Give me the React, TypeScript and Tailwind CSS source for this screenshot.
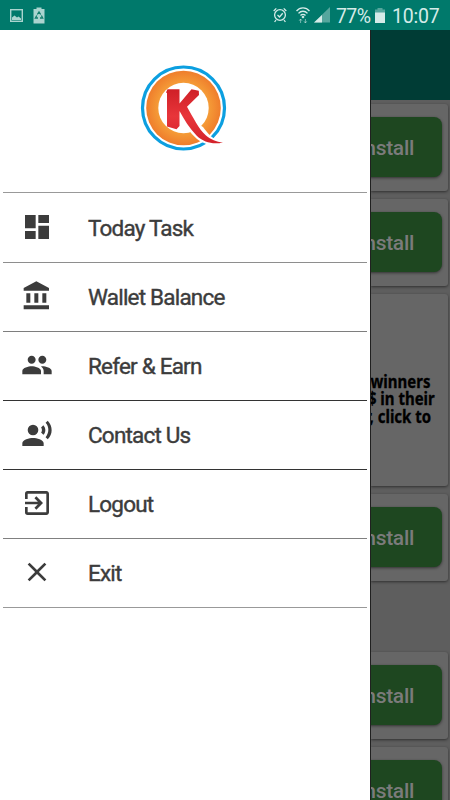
import React from 'react';
import {
  MdClose,
  MdDashboard,
  MdExitToApp,
  MdPeople,
  MdRecordVoiceOver,
} from 'react-icons/md';

function BankIcon({ size }: { size: number }) {
  return (
    <svg width={size} height={size} viewBox="0 0 24 24" fill="currentColor">
      <path d="M4 10v7h3v-7H4zm6 0v7h3v-7h-3zM2 22h19v-3H2v3zm14-12v7h3v-7h-3zm-4.5-9L2 6v2h19V6l-9.5-5z" />
    </svg>
  );
}

const menuItems = [
  { label: 'Today Task', icon: MdDashboard, row: 'h-[70px] pb-px border-b border-[#8e8e8e]' },
  { label: 'Wallet Balance', icon: BankIcon, row: 'h-[69px] pb-[3px] border-b border-[#7e7e7e]' },
  { label: 'Refer & Earn', icon: MdPeople, row: 'h-[69px] pb-[3px] border-b border-[#333333]' },
  { label: 'Contact Us', icon: MdRecordVoiceOver, row: 'h-[69px] pb-[3px] border-b border-[#333333]' },
  { label: 'Logout', icon: MdExitToApp, row: 'h-[69px] pb-[3px] border-b border-[#808080]' },
  { label: 'Exit', icon: MdClose, row: 'h-[69px] pb-[3px] border-b border-[#999999]' },
];

function StatusBar() {
  return (
    <header className="flex h-[30px] shrink-0 items-center bg-[#00796b] pl-2.5 pr-[10px] text-[#d5ebe8]">
      <svg width="13" height="13" viewBox="0 0 13 13" className="opacity-80">
        <rect x="0.7" y="0.7" width="11.6" height="11.6" fill="none" stroke="currentColor" strokeWidth="1.4" />
        <path d="M2 11V8.5L4.5 6.5L7 8.5L8.5 7.5L11 9.5V11Z" fill="currentColor" />
      </svg>
      <svg width="12" height="17" viewBox="0 0 12 17" className="ml-2.5 opacity-80">
        <path d="M0.5 2H3.5V0.5H8.5V2H11.5V16.5H0.5Z" fill="currentColor" />
        <path
          d="M4.3 7.5L6 5L7.7 7.5M8.4 8.5L9.7 11H7M5 11H2.4L3.8 8.5"
          fill="none"
          stroke="#17806f"
          strokeWidth="1.3"
        />
      </svg>
      <div className="ml-auto flex items-center">
        <svg width="14" height="16" viewBox="0 0 14 16" fill="none" stroke="currentColor" strokeWidth="1.3" className="mr-px">
          <circle cx="7" cy="8" r="5.4" />
          <path d="M0.7 4L3.3 1.4M13.3 4L10.7 1.4M3 13L1.6 15M11 13L12.4 15M4.5 8L6.5 10L9.7 6.3" />
        </svg>
        <svg width="14" height="17" viewBox="0 0 14 17" fill="none" stroke="currentColor" className="mr-px ml-2">
          <path
            d="M0.5 4C4 -0.2 10 -0.2 13.5 4M2.5 6.4C5 3.5 9 3.5 11.5 6.4M4.5 8.6C6 7 8 7 9.5 8.6"
            strokeWidth="1.4"
          />
          <circle cx="7" cy="10" r="0.9" fill="currentColor" />
          <path d="M4.6 16V12M3.2 13.7L4.6 12L6 13.7M9.4 12V16M8 14.3L9.4 16L10.8 14.3" strokeWidth="1" opacity="0.55" />
        </svg>
        <svg width="16" height="16" viewBox="0 0 16 16" className="ml-[3px]">
          <path d="M0 15.5L16 0V15.5Z" fill="currentColor" opacity="0.4" />
          <path d="M0 15.5L8 8V15.5Z" fill="currentColor" />
        </svg>
        <span className="ml-1.5 w-[36px] pt-[3px] whitespace-nowrap text-[19.5px] leading-[27px] tracking-[-0.6px]">
          77%
        </span>
        <svg width="10" height="15" viewBox="0 0 10 15" className="mr-px ml-[3px]">
          <path d="M0 1.5H2.5V0H7.5V1.5H10V15H0Z" fill="currentColor" opacity="0.4" />
          <path d="M0 4.5H10V15H0Z" fill="currentColor" />
        </svg>
        <span className="ml-1.5 w-[48px] pt-[3px] whitespace-nowrap text-[19.5px] leading-[27px] tracking-[-0.2px]">
          10:07
        </span>
      </div>
    </header>
  );
}

function Logo() {
  return (
    <svg width="88" height="88" viewBox="0 0 88 88">
      <defs>
        <radialGradient id="ring">
          <stop offset="0.6" stopColor="#f6a33a" />
          <stop offset="1" stopColor="#ef7d2c" />
        </radialGradient>
        <linearGradient id="letter" x1="0" y1="0" x2="0" y2="1">
          <stop offset="0" stopColor="#cf2027" />
          <stop offset="0.5" stopColor="#e8353a" />
          <stop offset="1" stopColor="#d3222a" />
        </linearGradient>
      </defs>
      <circle cx="44.5" cy="44" r="41" fill="white" stroke="#0c9fe0" strokeWidth="3.2" />
      <circle cx="44.5" cy="44" r="37.3" fill="url(#ring)" />
      <circle cx="44.5" cy="44" r="25.2" fill="white" />
      <path d="M38 47C45 60 51 69 58 75C66 81 75 83 88 80L80 77C74 75 69 70 64 63Z" fill="white" />
      <path
        d="M27 28.5L28.5 25.3H40.5V39.5L52.5 25.2L59.8 26.8L60 31L48 42.8C54 53 59.5 65 67 71.5C72 75.5 77 78 84 78.4C75 80.5 65 79 57.5 71.5C50.5 64.5 45 55 40.5 47V62L37.5 65.2L28 62.5V29Z"
        fill="url(#letter)"
      />
    </svg>
  );
}

function Drawer() {
  return (
    <aside className="flex w-[370px] shrink-0 flex-col bg-white">
      <div className="flex h-[162px] justify-center pt-[34px] pr-1">
        <Logo />
      </div>
      <nav className="mr-[3px] ml-[2.5px] border-t border-[#999999]">
        {menuItems.map(({ label, icon: Icon, row }) => (
          <div key={label} className={`flex items-center pl-[18px] text-[#3c3c3c] ${row}`}>
            <Icon size={32} />
            <span className="ml-[35.5px] pt-[3px] text-[22.5px] leading-none tracking-[-0.8px] [-webkit-text-stroke:0.4px_#3c3c3c]">
              {label}
            </span>
          </div>
        ))}
      </nav>
    </aside>
  );
}

function InstallCard() {
  return (
    <div className="flex h-[87px] shrink-0 items-center justify-end rounded-r-[3px] bg-[#666666] pr-1.5 pb-px shadow-[0_1px_3px_rgba(0,0,0,0.5)]">
      <div className="flex h-[60px] w-[150px] shrink-0 items-center justify-end rounded-lg bg-[#1e4720] pt-[3px] pr-7 text-[21px] font-medium tracking-[-0.3px] text-[#7b7b7b] shadow-[0_1px_3px_rgba(0,0,0,0.5)]">
        Install
      </div>
    </div>
  );
}

function OfferList() {
  return (
    <main className="flex min-w-0 flex-1 flex-col overflow-hidden border-l border-[#202020] bg-[#5e5e5e]">
      <div className="h-[70px] shrink-0 bg-[#003c35]" />
      <div className="flex flex-col gap-2 pt-1 pr-0.5">
        <InstallCard />
        <InstallCard />
        <div className="flex h-[192px] shrink-0 flex-col items-end justify-center rounded-r-[3px] bg-[#666666] pt-[18px] font-['Noto_Sans',sans-serif] text-[17px] leading-[17.4px] font-bold text-black shadow-[0_1px_3px_rgba(0,0,0,0.5)] [-webkit-text-stroke:0.3px_black]">
          <p className="origin-right scale-x-[0.88] pr-5 whitespace-nowrap">winners</p>
          <p className="origin-right scale-x-[0.88] pr-[15px] whitespace-nowrap">$ in their</p>
          <p className="origin-right scale-x-[0.88] pr-[19px] whitespace-nowrap">r, click to</p>
        </div>
        <InstallCard />
        <div className="h-[55px] shrink-0" />
        <InstallCard />
        <InstallCard />
      </div>
    </main>
  );
}

export default function App() {
  return (
    <div className="flex h-[800px] w-[450px] flex-col overflow-hidden bg-white font-[Roboto,sans-serif]">
      <StatusBar />
      <div className="flex min-h-0 flex-1">
        <Drawer />
        <OfferList />
      </div>
    </div>
  );
}
